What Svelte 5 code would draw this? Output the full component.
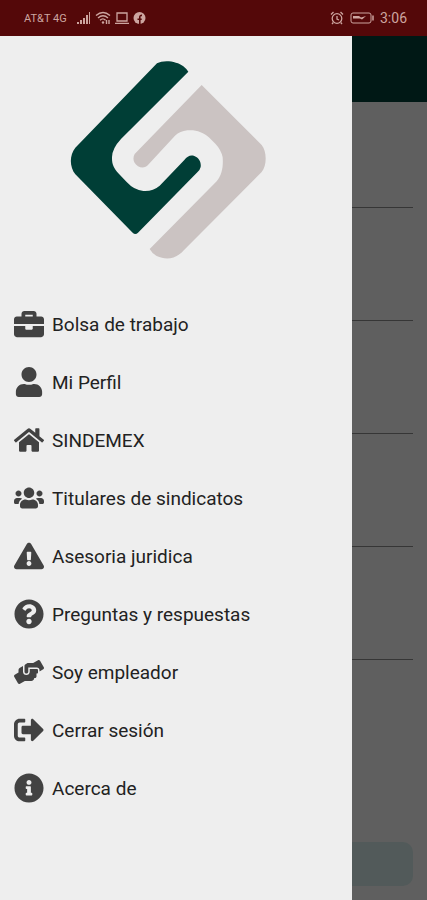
<script>
  const items = [
    {
      label: 'Bolsa de trabajo',
      box: '0 0 512 512',
      path: 'M320 336c0 8.84-7.16 16-16 16h-96c-8.84 0-16-7.16-16-16v-48H0v144c0 25.6 22.4 48 48 48h416c25.6 0 48-22.4 48-48V288H320v48zm144-208h-80V80c0-25.6-22.4-48-48-48H176c-25.6 0-48 22.4-48 48v48H48c-25.6 0-48 22.4-48 48v80h512v-80c0-25.6-22.4-48-48-48zm-144 0H192V96h128v32z'
    },
    {
      label: 'Mi Perfil',
      box: '0 0 448 512',
      path: 'M224 256c70.7 0 128-57.3 128-128S294.7 0 224 0 96 57.3 96 128s57.3 128 128 128zm89.6 32h-16.7c-22.2 10.2-46.9 16-72.9 16s-50.6-5.8-72.9-16h-16.7C60.2 288 0 348.2 0 422.4V464c0 26.5 21.5 48 48 48h352c26.5 0 48-21.5 48-48v-41.6c0-74.2-60.2-134.4-134.4-134.4z'
    },
    {
      label: 'SINDEMEX',
      box: '0 0 576 512',
      path: 'M280.37 148.26L96 300.11V464a16 16 0 0 0 16 16l112.06-.29a16 16 0 0 0 15.92-16V368a16 16 0 0 1 16-16h64a16 16 0 0 1 16 16v95.64a16 16 0 0 0 16 16.05L464 480a16 16 0 0 0 16-16V300L295.67 148.26a12.19 12.19 0 0 0-15.3 0zM571.6 251.47L488 182.56V44.05a12 12 0 0 0-12-12h-56a12 12 0 0 0-12 12v72.61L318.47 43a48 48 0 0 0-61 0L4.34 251.47a12 12 0 0 0-1.6 16.9l25.5 31A12 12 0 0 0 45.15 301l235.22-193.74a12.19 12.19 0 0 1 15.3 0L530.9 301a12 12 0 0 0 16.9-1.6l25.5-31a12 12 0 0 0-1.7-16.93z'
    },
    {
      label: 'Titulares de sindicatos',
      box: '0 0 640 512',
      path: 'M96 224c35.3 0 64-28.7 64-64s-28.7-64-64-64-64 28.7-64 64 28.7 64 64 64zm448 0c35.3 0 64-28.7 64-64s-28.7-64-64-64-64 28.7-64 64 28.7 64 64 64zm32 32h-64c-17.6 0-33.5 7.1-45.1 18.6 40.3 22.1 68.9 62 75.1 109.4h66c17.7 0 32-14.3 32-32v-32c0-35.3-28.7-64-64-64zm-256 0c61.9 0 112-50.1 112-112S381.9 32 320 32 208 82.1 208 144s50.1 112 112 112zm76.8 32h-8.3c-20.8 10-43.9 16-68.5 16s-47.6-6-68.5-16h-8.3C179.6 288 128 339.6 128 403.2V432c0 26.5 21.5 48 48 48h288c26.5 0 48-21.5 48-48v-28.8c0-63.6-51.6-115.2-115.2-115.2zm-223.7-13.4C161.5 263.1 145.6 256 128 256H64c-35.3 0-64 28.7-64 64v32c0 17.7 14.3 32 32 32h65.9c6.3-47.4 34.9-87.3 75.2-109.4z'
    },
    {
      label: 'Asesoria juridica',
      box: '0 0 576 512',
      path: 'M569.517 440.013C587.975 472.007 564.806 512 527.94 512H48.054c-36.937 0-59.999-40.055-41.577-71.987L246.423 23.985c18.467-32.009 64.72-31.951 83.154 0l239.94 416.028zM288 354c-25.405 0-46 20.595-46 46s20.595 46 46 46 46-20.595 46-46-20.595-46-46-46zm-43.673-165.346l7.418 136c.347 6.364 5.609 11.346 11.982 11.346h48.546c6.373 0 11.635-4.982 11.982-11.346l7.418-136c.375-6.874-5.098-12.654-11.982-12.654h-63.383c-6.884 0-12.356 5.78-11.981 12.654z'
    },
    {
      label: 'Preguntas y respuestas',
      box: '0 0 512 512',
      path: 'M504 256c0 136.997-111.043 248-248 248S8 392.997 8 256C8 119.083 119.043 8 256 8s248 111.083 248 248zM262.655 90c-54.497 0-89.255 22.957-116.549 63.758-3.536 5.286-2.353 12.415 2.715 16.258l34.699 26.31c5.205 3.947 12.621 3.008 16.665-2.122 17.864-22.658 30.113-35.797 57.303-35.797 20.429 0 45.698 13.148 45.698 32.958 0 14.976-12.363 22.667-32.534 33.976C247.128 238.528 216 254.941 216 296v4c0 6.627 5.373 12 12 12h56c6.627 0 12-5.373 12-12v-1.333c0-28.462 83.186-29.647 83.186-106.667 0-58.002-60.165-102-116.531-102zM256 338c-25.365 0-46 20.635-46 46 0 25.364 20.635 46 46 46s46-20.636 46-46c0-25.365-20.635-46-46-46z'
    },
    {
      label: 'Soy empleador',
      box: '0 0 640 512',
      path: 'M488 192H336v56c0 39.7-32.3 72-72 72s-72-32.3-72-72V126.4l-64.9 39C107.800 176.900 96 197.800 96 220.200v47.300l-80 46.200C.7 322.500-4.600 342.100 4.300 357.400l80 138.600c8.800 15.300 28.400 20.500 43.700 11.700L231.400 448H368c35.300 0 64-28.700 64-64h16c17.700 0 32-14.300 32-32v-64h8c13.300 0 24-10.700 24-24v-48c0-13.300-10.700-24-24-24zm147.700-37.400L555.700 16C546.900.7 527.300-4.500 512 4.300L408.600 64H306.400c-12 0-23.700 3.400-33.900 9.700L239 94.600c-9.400 5.800-15 16.100-15 27.100V248c0 22.100 17.900 40 40 40s40-17.900 40-40v-88h184c30.900 0 56 25.100 56 56v28.500l80-46.200c15.300-8.900 20.500-28.400 11.700-43.700z'
    },
    {
      label: 'Cerrar sesión',
      box: '0 0 512 512',
      path: 'M497 273L329 441c-15 15-41 4.500-41-17v-96H152c-13.300 0-24-10.700-24-24v-96c0-13.300 10.700-24 24-24h136V88c0-21.400 25.900-32 41-17l168 168c9.300 9.400 9.300 24.600 0 34zM192 436v-40c0-6.600-5.400-12-12-12H96c-17.700 0-32-14.300-32-32V160c0-17.700 14.300-32 32-32h84c6.600 0 12-5.400 12-12V76c0-6.600-5.400-12-12-12H96c-53 0-96 43-96 96v192c0 53 43 96 96 96h84c6.600 0 12-5.400 12-12z'
    },
    {
      label: 'Acerca de',
      box: '0 0 512 512',
      path: 'M256 8C119.043 8 8 119.083 8 256c0 136.997 111.043 248 248 248s248-111.003 248-248C504 119.083 392.957 8 256 8zm0 110c23.196 0 42 18.804 42 42s-18.804 42-42 42-42-18.804-42-42 18.804-42 42-42zm56 254c0 6.627-5.373 12-12 12h-88c-6.627 0-12-5.373-12-12v-24c0-6.627 5.373-12 12-12h12v-64h-12c-6.627 0-12-5.373-12-12v-24c0-6.627 5.373-12 12-12h64c6.627 0 12 5.373 12 12v100h12c6.627 0 12 5.373 12 12v24z'
    }
  ];

  const fields = [1, 2, 3, 4, 5];
</script>

<div class="app">
  <header class="status-bar">
    <span class="carrier">AT&amp;T 4G</span>
    <div class="status-icons">
      <svg width="14" height="14" viewBox="0 0 14 14" fill="currentColor" aria-hidden="true">
        <path d="M0 11h2v2H0zM3 9h2v4H3zM6 7h2v6H6zM9 4h2v9H9zM12 1h1v12h-1z" />
      </svg>
      <svg width="16" height="14" viewBox="0 0 16 14" fill="none" stroke="currentColor" stroke-width="1.4" aria-hidden="true">
        <path d="M1 4.500Q8-1.500 15 4.500M3 7Q8 2.500 13 7M5 9.300Q8 6.500 10.500 9.300" />
        <circle cx="8" cy="11.500" r="1.200" fill="currentColor" stroke="none" />
        <path d="M11.500 9v4M14 13V9" />
      </svg>
      <svg width="14" height="14" viewBox="0 0 14 14" fill="none" stroke="currentColor" stroke-width="1.300" aria-hidden="true">
        <path d="M2 2h10v8H2zM0 12.300h14" />
      </svg>
      <svg width="13" height="14" viewBox="0 0 13 14" aria-hidden="true">
        <circle cx="6.500" cy="7" r="6" fill="currentColor" />
        <path d="M6.800 13V6.200q0-2 2.200-1.800M4.500 8.200h4.200" fill="none" stroke="#540809" stroke-width="1.600" />
      </svg>
    </div>
    <div class="status-right">
      <svg width="14" height="14" viewBox="0 0 14 14" fill="none" stroke="currentColor" stroke-width="1.300" aria-hidden="true">
        <circle cx="7" cy="7.500" r="4.800" />
        <path d="M7 5v3l2 1M1 3.500L3.500 1M13 3.500L10.500 1M3.300 11.500L2 13M10.700 11.500L12 13" />
      </svg>
      <svg width="24" height="12" viewBox="0 0 24 12" fill="none" stroke="currentColor" aria-hidden="true">
        <rect x="1" y="1" width="20" height="10" rx="2" />
        <path d="M23 3.500v5" stroke-width="1.500" />
        <path d="M3 4h6l2 1.500 5-1.500-4 3.500-2-1H3z" fill="currentColor" stroke="none" />
      </svg>
      <span class="clock">3:06</span>
    </div>
  </header>

  <div class="screen">
    <main class="page" inert>
      <div class="app-bar"></div>
      <form class="form">
        {#each fields as field (field)}
          <input type="text" aria-label="Campo {field}" />
        {/each}
        <button type="button" class="submit" aria-label="Guardar"></button>
      </form>
    </main>
    <div class="scrim"></div>

    <aside class="drawer">
      <svg class="logo" viewBox="30 30 636 600" role="img" aria-label="SINDEMEX">
        <path
          fill="#003e36"
          d="M291 40C312 28 352 34 370 49Q380 57 385 65L183 267Q154 298 156 326C156 343 162 355 175 370L200 396Q222 420 250 423Q278 425 299 407L373 330C382 318 392 314 403 318C417 324 424 336 422 351Q420 360 412 367L234 548Q226 556 218 548L46 373C28 350 28 315 46 293Z"
        />
        <path
          fill="#cbc3c2"
          d="M425 105L605 285C621 303 621 348 605 366L370 602C346 628 318 631 290 618Q275 609 269 597L470 394C486 374 490 352 488 322Q484 300 466 281L448 263C430 246 405 238 382 241Q360 244 345 257L266 343C257 354 245 355 234 349C220 340 217 325 224 312Z"
        />
      </svg>
      <nav>
        {#each items as item (item.label)}
          <a href="#menu">
            <svg class="icon" viewBox={item.box} aria-hidden="true">
              <path d={item.path} />
            </svg>
            {item.label}
          </a>
        {/each}
      </nav>
    </aside>
  </div>
</div>

<style>
  :global(body) {
    margin: 0;
  }

  .app {
    display: flex;
    flex-direction: column;
    min-height: 100vh;
    font-family: Roboto, 'Liberation Sans', sans-serif;
  }

  .status-bar {
    display: flex;
    align-items: center;
    height: 36px;
    padding: 0 20px 0 24px;
    background: #540809;
    color: #cda5a0;
  }

  .carrier {
    font-size: 11px;
  }

  .status-icons {
    display: flex;
    align-items: center;
    gap: 4px;
    margin-left: 10px;
  }

  .status-right {
    display: flex;
    align-items: center;
    gap: 6px;
    margin-left: auto;
  }

  .clock {
    font-size: 14px;
  }

  .screen {
    position: relative;
    display: flex;
    flex: 1;
  }

  .page {
    display: flex;
    flex: 1;
    flex-direction: column;
    background: #eee;
  }

  .app-bar {
    height: 66px;
    background: #003e36;
  }

  .form {
    display: flex;
    flex: 1;
    flex-direction: column;
    gap: 72px;
    padding: 65px 14px 14px;
  }

  .form input {
    box-sizing: border-box;
    height: 41px;
    padding: 0;
    border: 0;
    border-bottom: 1px solid #888;
    background: none;
    font: inherit;
  }

  .submit {
    height: 44px;
    margin-top: auto;
    border: 0;
    border-radius: 10px;
    background: #cde1e0;
  }

  .scrim {
    position: absolute;
    inset: 0;
    background: rgba(0, 0, 0, 0.6);
  }

  .drawer {
    position: absolute;
    inset: 0 75px 0 0;
    display: flex;
    flex-direction: column;
    padding-top: 24px;
    background: #eee;
    overflow-y: auto;
  }

  .logo {
    flex: none;
    align-self: center;
    height: 200px;
    margin-bottom: 35px;
  }

  nav a {
    display: flex;
    align-items: center;
    gap: 8px;
    height: 58px;
    padding-left: 14px;
    color: #222;
    font-size: 19px;
    text-decoration: none;
  }

  .icon {
    width: 30px;
    height: 30px;
    fill: #424242;
  }
</style>
